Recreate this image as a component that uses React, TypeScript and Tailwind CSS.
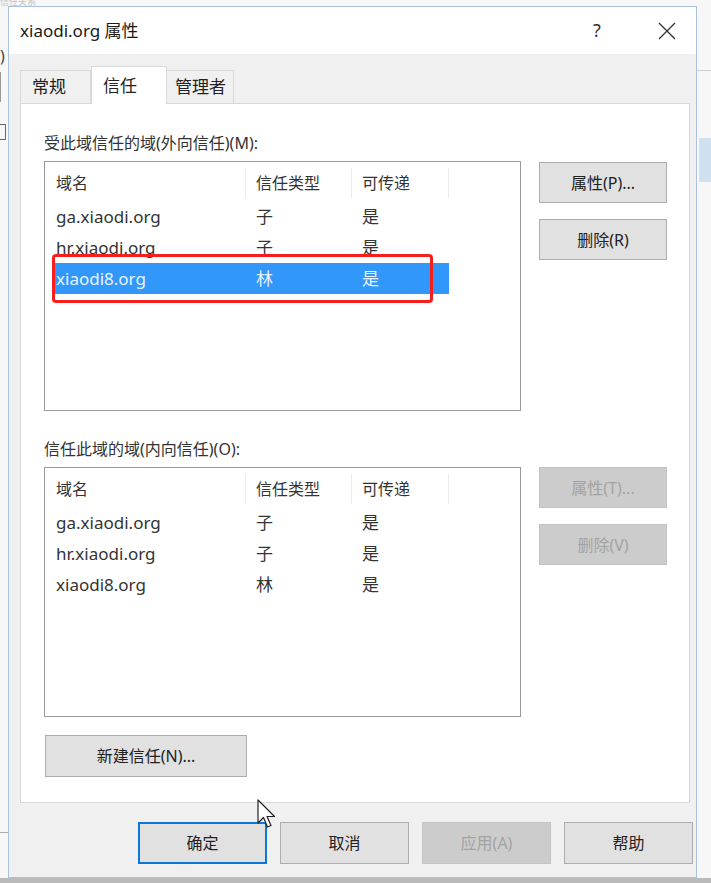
import React from "react";

const font = "font-['Noto_Sans','Noto_Sans_CJK_SC',sans-serif]";

const ROWS = [
  { name: "ga.xiaodi.org", type: "子", transit: "是" },
  { name: "hr.xiaodi.org", type: "子", transit: "是" },
  { name: "xiaodi8.org", type: "林", transit: "是" },
];

const btn =
  "flex h-[41px] w-[128px] items-center justify-center border border-[#adadad] bg-[#e1e1e1] text-[16px] text-[#222]";
const btnDisabled =
  "flex h-[41px] w-[128px] items-center justify-center border border-[#c4c4c4] bg-[#cccccc] text-[16px] text-[#a3a3a3]";

function TrustList({ selected }: { selected?: number }) {
  return (
    <div className="relative h-[250px] w-[477px] border border-[#9a9a9a] bg-white px-[7px] pt-[6px]">
      <div className="flex h-[30px] items-center text-[16px] text-[#333]">
        <div className="flex h-full w-[194px] items-center border-r border-[#ececec] pl-[4px]">域名</div>
        <div className="flex h-full w-[106px] items-center border-r border-[#ececec] pl-[10px]">信任类型</div>
        <div className="flex h-full w-[97px] items-center border-r border-[#ececec] pl-[10px]">可传递</div>
      </div>
      <div className="mt-[3px] flex flex-col">
        {ROWS.map((r, i) => (
          <div
            key={r.name}
            className={`flex h-[31px] w-[397px] items-center text-[17px] ${
              i === selected ? "bg-[#3297fb] text-[#e9f3ff]" : "text-[#333]"
            }`}
          >
            <div className="w-[194px] pl-[4px]">{r.name}</div>
            <div className="w-[106px] pl-[10px]">{r.type}</div>
            <div className="w-[97px] pl-[10px]">{r.transit}</div>
          </div>
        ))}
      </div>
      {selected !== undefined && (
        <div className="absolute left-[7px] top-[92px] h-[49px] w-[381px] rounded-[4px] border-[3px] border-[#f5201e]" />
      )}
    </div>
  );
}

export default function App() {
  return (
    <div className={`relative h-[883px] w-[711px] overflow-hidden bg-[#f7f7f7] ${font}`}>
      {/* window behind the dialog */}
      <div className="absolute left-[0px] top-[-3px] text-[9px] leading-[9px] text-[#c4c4c4]">信任关系</div>
      <div className="absolute left-[0px] top-[44px] text-[16px] text-[#444]">)</div>
      <div className="absolute left-[0px] top-[72px] h-[30px] w-[1px] bg-[#999]" />
      <div className="absolute left-[0px] top-[124px] h-[16px] w-[6px] border-y border-r border-[#666]" />
      <div className="absolute left-[0px] top-[832px] h-[1px] w-[8px] bg-[#aaa]" />
      <div className="absolute right-[0px] top-[138px] h-[44px] w-[12px] bg-[#cfe0f0]" />
      <div className="absolute right-[0px] top-[70px] h-[1px] w-[14px] bg-[#ccc]" />
      <div className="absolute bottom-0 left-0 h-[5px] w-full bg-[#b9b9b9]" />

      <div className="ml-[8px] pt-[6px]">
        <div className="flex h-[872px] w-[689px] flex-col border border-[#a9c3de] bg-[#f0f0f0]">
          {/* title bar */}
          <div className="flex h-[47px] items-center bg-white pl-[11px] text-[17px] text-[#1a1a1a]">
            <span>xiaodi.org 属性</span>
            <span className="ml-auto w-[24px] text-center text-[18px] text-[#333]">?</span>
            <span className="ml-[46px] mr-[17px] flex w-[24px] justify-center">
              <svg width="18" height="18" viewBox="0 0 18 18" fill="none" stroke="#333" strokeWidth="1.3">
                <path d="M1 1 17 17M17 1 1 17" />
              </svg>
            </span>
          </div>

          <div className="flex flex-1 flex-col px-[11px] pt-[12px]">
            {/* tabs */}
            <div className="flex h-[37px] items-end">
              <div className="flex h-[33px] w-[71px] items-center border border-b-0 border-[#d9d9d9] bg-[#f0f0f0] pl-[11px] text-[17px] text-[#222]">
                常规
              </div>
              <div className="relative z-10 -mb-[1px] flex h-[38px] w-[76px] items-center border border-b-0 border-[#d9d9d9] bg-white pl-[11px] text-[17px] text-[#222]">
                信任
              </div>
              <div className="flex h-[33px] w-[67px] items-center border border-b-0 border-l-0 border-[#d9d9d9] bg-[#f0f0f0] pl-[8px] text-[17px] text-[#222]">
                管理者
              </div>
            </div>

            {/* panel */}
            <div className="h-[700px] w-[670px] border border-[#d9d9d9] bg-white pl-[23px] pt-[28px]">
              <div className="text-[16px] leading-[22px] text-[#333]">受此域信任的域(外向信任)(M):</div>
              <div className="mt-[7px] flex gap-[18px]">
                <TrustList selected={2} />
                <div className="flex flex-col gap-[16px] pt-[1px]">
                  <div className={btn}>属性(P)...</div>
                  <div className={btn}>删除(R)</div>
                </div>
              </div>

              <div className="mt-[27px] text-[16px] leading-[22px] text-[#333]">信任此域的域(内向信任)(O):</div>
              <div className="mt-[7px] flex gap-[18px]">
                <TrustList />
                <div className="flex flex-col gap-[16px]">
                  <div className={btnDisabled}>属性(T)...</div>
                  <div className={btnDisabled}>删除(V)</div>
                </div>
              </div>

              <div className="mt-[18px] ml-[1px] flex h-[42px] w-[202px] items-center justify-center border border-[#adadad] bg-[#e1e1e1] text-[16px] text-[#222]">
                新建信任(N)...
              </div>
            </div>

            {/* dialog buttons */}
            <div className="mt-[19px] flex justify-end gap-[13px]">
              <div className="flex h-[42px] w-[129px] items-center justify-center border-2 border-[#0a78d7] bg-[#e1e1e1] text-[16px] text-[#222]">
                确定
              </div>
              <div className="flex h-[42px] w-[129px] items-center justify-center border border-[#adadad] bg-[#e1e1e1] text-[16px] text-[#222]">
                取消
              </div>
              <div className="flex h-[42px] w-[129px] items-center justify-center border border-[#c4c4c4] bg-[#cccccc] text-[16px] text-[#a3a3a3]">
                应用(A)
              </div>
              <div className="-mr-[8px] flex h-[42px] w-[129px] items-center justify-center border border-[#adadad] bg-[#e1e1e1] text-[16px] text-[#222]">
                帮助
              </div>
            </div>
          </div>
        </div>
      </div>

      {/* mouse pointer */}
      <svg className="absolute left-[257px] top-[799px]" width="22" height="32" viewBox="0 0 22 32">
        <path d="M1 1 L1 24 L6.5 18.5 L10.5 28 L14 26.5 L10 17.5 L17.5 17.5 Z" fill="#fff" stroke="#222" strokeWidth="1.2" strokeLinejoin="round" />
      </svg>
    </div>
  );
}
